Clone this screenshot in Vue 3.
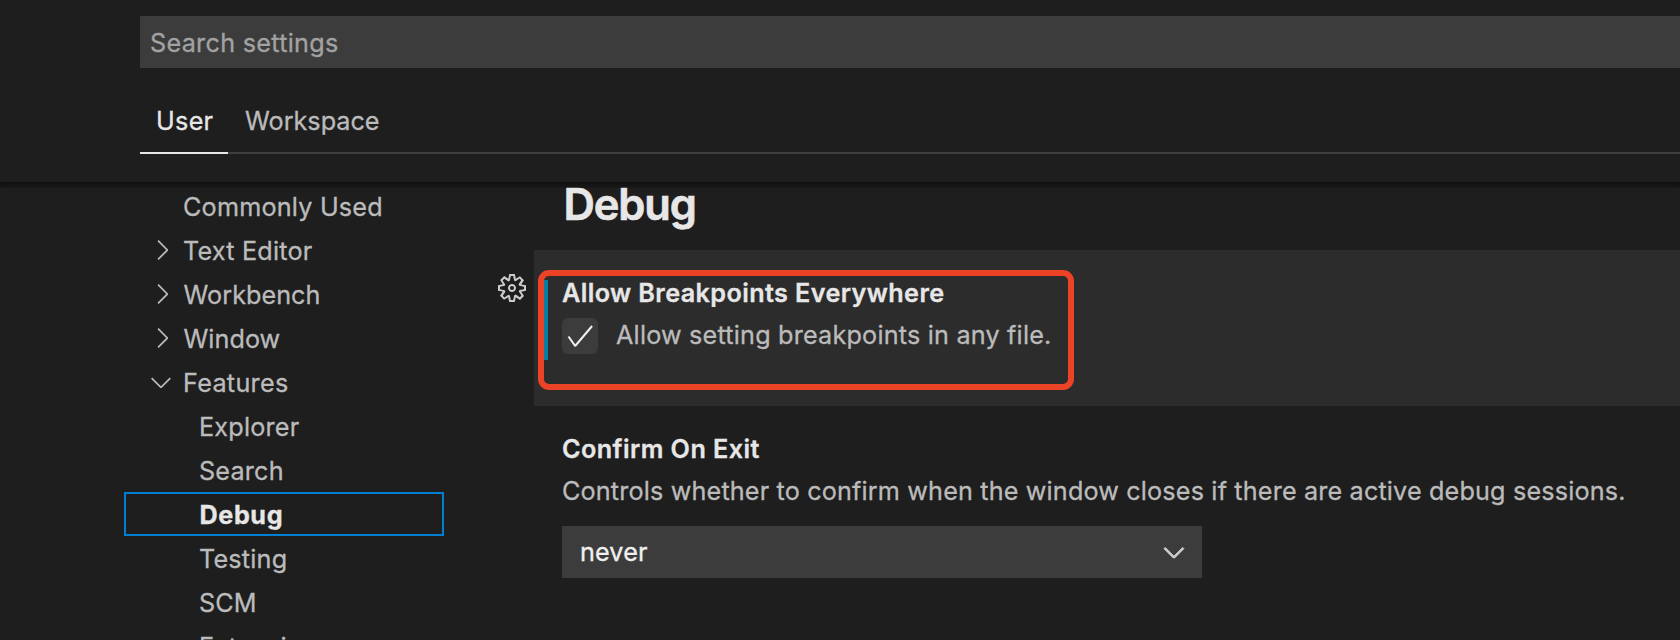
<script setup>
const tree = [
  { label: 'Commonly Used', fit: 'mid' },
  { label: 'Text Editor', icon: 'right', fit: 'mid' },
  { label: 'Workbench', icon: 'right', fit: 'tight' },
  { label: 'Window', icon: 'right', fit: 'tight' },
  { label: 'Features', icon: 'down', fit: 'wide' },
  { label: 'Explorer', child: true, fit: 'mid' },
  { label: 'Search', child: true, fit: 'mid' },
  { label: 'Debug', child: true, selected: true, fit: 'bold' },
  { label: 'Testing', child: true, fit: 'mid' },
  { label: 'SCM', child: true, fit: 'tight' },
  { label: 'Extensions', child: true, fit: 'mid' }
]
const chevrons = {
  right: 'M10.072 8.024L5.715 3.667l.618-.62L11 7.716v.618L6.333 13l-.618-.619 4.357-4.357z',
  down: 'M7.976 10.072l4.357-4.357.62.618L8.284 11h-.618L3 6.333l.619-.618 4.357 4.357z'
}
</script>

<template>
  <div class="settings">
    <header class="header">
      <div class="search">Search settings</div>
      <nav class="tabs">
        <div class="tab active">User</div>
        <div class="tab workspace">Workspace</div>
      </nav>
    </header>
    <div class="body">
      <div class="scroll-shadow"></div>
      <aside class="tree">
        <div
          v-for="row in tree"
          :key="row.label"
          class="row"
          :class="[row.fit, { child: row.child, selected: row.selected }]"
        >
          <svg v-if="row.icon" class="twistie" :class="row.icon" viewBox="0 0 16 16"><path :d="chevrons[row.icon]" /></svg>
          <span>{{ row.label }}</span>
        </div>
      </aside>
      <main class="content">
        <h1>Debug</h1>
        <section class="item focused">
          <svg class="gear" viewBox="0 0 16 16">
            <path fill-rule="evenodd" d="M9.1 4.4L8.6 2H7.4l-.5 2.4-.7.3-2-1.3-.9.8 1.3 2-.2.7-2.4.5v1.2l2.4.5.3.8-1.3 2 .8.8 2-1.3.8.3.4 2.3h1.2l.5-2.4.8-.3 2 1.3.8-.8-1.3-2 .3-.8 2.3-.4V7.4l-2.4-.5-.3-.8 1.3-2-.8-.8-2 1.3-.7-.2zM9.4 1l.5 2.4L12 2.1l2 2-1.4 2.1 2.4.4v2.8l-2.4.5L14 12l-2 2-2.1-1.4-.5 2.4H6.6l-.5-2.4L4 13.9l-2-2 1.4-2.1L1 9.4V6.6l2.4-.5L2.1 4l2-2 2.1 1.4.4-2.4h2.8zm.6 7c0 1.1-.9 2-2 2s-2-.9-2-2 .9-2 2-2 2 .9 2 2zM8 9c.6 0 1-.4 1-1s-.4-1-1-1-1 .4-1 1 .4 1 1 1z" />
          </svg>
          <div class="modified"></div>
          <div class="title">Allow Breakpoints Everywhere</div>
          <div class="check-row">
            <div class="checkbox">
              <svg viewBox="0 0 16 16"><path d="M14.431 3.323l-8.47 10-.79-.036-3.35-4.77.818-.574 2.978 4.24 8.051-9.506.764.646z" /></svg>
            </div>
            <span class="desc">Allow setting breakpoints in any file.</span>
          </div>
          <div class="callout"></div>
        </section>
        <section class="item">
          <div class="title exit">Confirm On Exit</div>
          <div class="desc">Controls whether to confirm when the window closes if there are active debug sessions.</div>
          <div class="select">
            <span>never</span>
            <svg viewBox="0 0 16 16"><path :d="chevrons.down" /></svg>
          </div>
        </section>
      </main>
    </div>
  </div>
</template>

<style>
html, body { margin: 0; background: #1e1e1e; overflow: hidden; }
</style>

<style scoped>
* { box-sizing: border-box; }
svg { display: block; fill: currentColor; flex: none; }
.settings {
  width: 1680px;
  height: 640px;
  display: flex;
  flex-direction: column;
  overflow: hidden;
  background: #1e1e1e;
  color: #bbbbbb;
  font: 400 25.2px/44px Inter, "Liberation Sans", sans-serif;
  -webkit-text-stroke: 0.3px currentColor;
  white-space: nowrap;
}
.header { height: 182px; flex: none; padding: 16px 0 0 140px; }
.search {
  height: 52px;
  padding-left: 10px;
  background: #3c3c3c;
  color: #a2a2a2;
  line-height: 54px;
  letter-spacing: 0.29px;
}
.tabs { display: flex; height: 62px; margin-top: 24px; border-bottom: 2px solid #3f3f3f; }
.tab { height: 62px; line-height: 58px; color: #bbbbbb; }
.tab.active {
  width: 88px;
  padding-left: 16px;
  color: #e7e7e7;
  border-bottom: 2px solid #e7e7e7;
  letter-spacing: 0.3px;
}
.tab.workspace { padding-left: 17px; letter-spacing: 0; }
.body { position: relative; display: flex; flex: 1; min-height: 0; }
.scroll-shadow {
  position: absolute;
  inset: 0 0 auto 0;
  height: 6px;
  z-index: 2;
  box-shadow: inset 0 12px 12px -12px #000;
}
.tree { width: 320px; margin-left: 124px; padding-top: 2px; flex: none; }
.row { display: flex; height: 44px; padding-left: 59px; line-height: 46px; }
.row.child { padding-left: 75px; }
.row.tight { letter-spacing: 0.04px; padding-left: 59.5px; }
.row.child.tight { padding-left: 75px; }
.row.mid { letter-spacing: 0.2px; }
.row.wide { letter-spacing: 0.3px; }
.row.bold { letter-spacing: 0.6px; }
.row.selected { border: 2px solid #007fd4; padding-left: 73.5px; line-height: 42px; color: #e7e7e7; font-weight: 700; }
.twistie { width: 32px; height: 32px; margin-top: 6px; }
.twistie.right { margin-left: -37px; margin-right: 5px; }
.row.tight .twistie.right { margin-left: -37.5px; margin-right: 5.5px; }
.twistie.down { margin-left: -38px; margin-right: 6px; }
.content { margin-left: 90px; flex: 1; min-width: 0; }
h1 {
  height: 68px;
  margin: 0;
  padding-left: 29.5px;
  color: #e7e7e7;
  font-size: 43.4px;
  font-weight: 600;
  line-height: 44px;
  letter-spacing: -1.1px;
  -webkit-text-stroke: 0.7px currentColor;
}
.item { position: relative; height: 156px; padding: 18px 0 0 28px; }
.focused { background: #2c2c2c; }
.title { height: 50px; line-height: 50px; color: #e7e7e7; font-weight: 600; letter-spacing: 0.4px; }
.title.exit { letter-spacing: 0.437px; }
.desc { letter-spacing: 0.16px; line-height: 34px; }
.check-row { display: flex; height: 36px; gap: 18px; }
.check-row .desc { letter-spacing: 0.2px; }
.checkbox { width: 36px; height: 36px; padding: 2px; border-radius: 6px; background: #3c3c3c; color: #f0f0f0; }
.gear { position: absolute; left: -38px; top: 22px; width: 32px; height: 32px; color: #cccccc; }
.modified { position: absolute; left: 8px; top: 30px; width: 6px; height: 80px; background: #087ea4; }
.callout { position: absolute; left: 4px; top: 20px; width: 536px; height: 120px; border: 6px solid #ec4226; border-radius: 11px; }
.select {
  display: flex;
  justify-content: space-between;
  width: 640px;
  height: 52px;
  margin-top: 18px;
  padding: 0 12px 0 18px;
  background: #3c3c3c;
  color: #f0f0f0;
  line-height: 53px;
  letter-spacing: 0.14px;
}
.select svg { width: 32px; height: 32px; margin-top: 10px; color: #cccccc; stroke: currentColor; stroke-width: 0.5; }
</style>
